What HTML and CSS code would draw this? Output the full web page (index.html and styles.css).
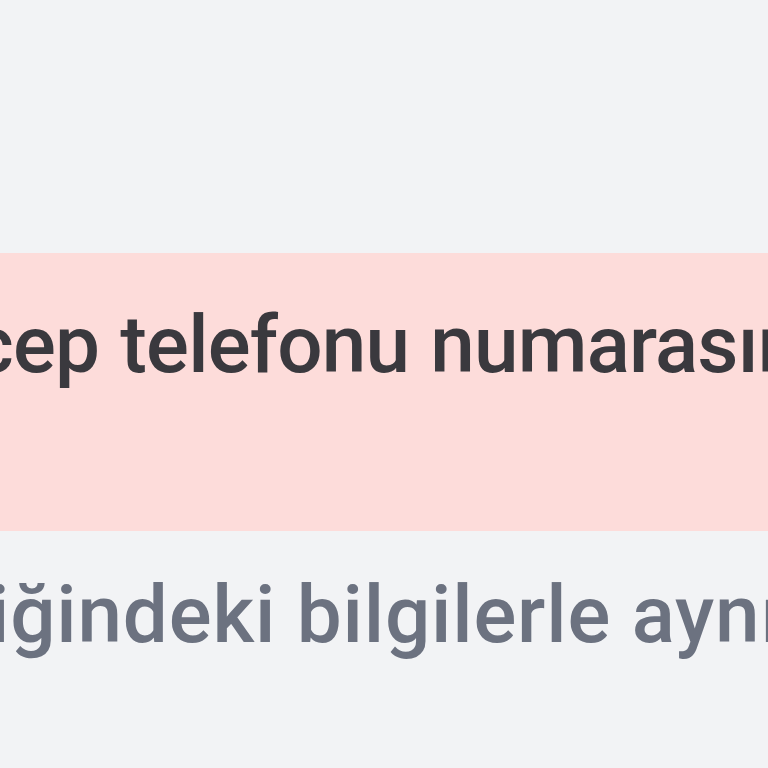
FILE: index.html
```html
<!DOCTYPE html>
<html lang="tr">
<head>
    <meta charset="UTF-8">
    <meta name="viewport" content="width=device-width, initial-scale=1.0">
    <title>Doğrulama</title>
    <link rel="stylesheet" href="styles.css">
</head>
<body>
    <div class="page">
        <!-- uyarı kutusu -->
        <div class="alert">
            <p class="alert-text">cep telefonu numarasını</p>
        </div>

        <!-- açıklama -->
        <p class="hint">iğindeki bilgilerle aynı</p>
    </div>
</body>
</html>
```

FILE: styles.css
```css
body {
    margin: 0;
    background: #f2f3f5;
    font-family: Roboto, "Noto Sans", sans-serif;
    overflow: hidden;
}

.page {
    width: 768px;
    height: 768px;
    padding-top: 253px;
    box-sizing: border-box;
    overflow: hidden;
}

.alert {
    height: 278px;
    background: #fddcda;
    padding-top: 52px;
    box-sizing: border-box;
}

.alert-text {
    margin: 0 0 0 -28px;
    font-size: 80px;
    line-height: 1;
    font-weight: 500;
    letter-spacing: -0.8px;
    word-spacing: 2px;
    color: #3a393e;
    white-space: nowrap;
}

.hint {
    margin: 44px 0 0 -11px;
    font-size: 80px;
    line-height: 1;
    font-weight: 500;
    letter-spacing: 0.8px;
    color: #6c7280;
    white-space: nowrap;
}
```
